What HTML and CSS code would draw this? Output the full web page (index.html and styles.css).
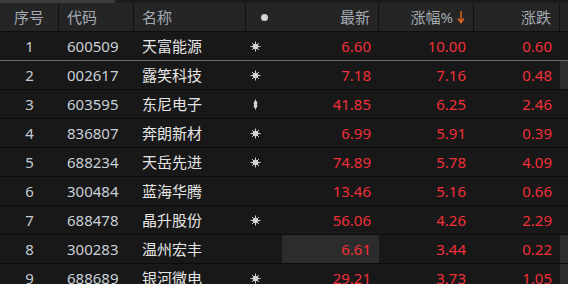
FILE: index.html
```html
<!DOCTYPE html>
<html lang="zh">
<head>
<meta charset="utf-8">
<link rel="stylesheet" href="styles.css">
</head>
<body>
<div class="board">
  <div class="hscroll"><div class="thumb"></div></div>
  <div class="row head">
    <div class="c c-no sep">序号</div>
    <div class="c c-code sep">代码</div>
    <div class="c c-name sep">名称</div>
    <div class="c c-dot"><span class="dot"></span></div>
    <div class="c c-num sep">最新</div>
    <div class="c c-num sep">涨幅%<svg class="arrow" width="8" height="14" viewBox="0 0 8 14"><path d="M4 1V12" stroke="#e8691e" stroke-width="1.4"/><path d="M1 8.5L4 12.5L7 8.5" fill="none" stroke="#e8691e" stroke-width="1.4"/></svg></div>
    <div class="c c-num sep">涨跌</div>
    <div class="c c-x"></div>
  </div>

  <div class="row pin">
    <div class="c c-no">1</div><div class="c c-code">600509</div><div class="c c-name">天富能源</div>
    <div class="c c-mark"><svg class="star" width="11" height="11" viewBox="0 0 11 11"><circle cx="5.5" cy="5.5" r="2.8" fill="#d2d2d2"/><path d="M5.5 0.5V10.5M0.5 5.5H10.5M2 2L9 9M9 2L2 9" stroke="#d2d2d2" stroke-width="1"/></svg></div>
    <div class="c c-num up">6.60</div><div class="c c-num up">10.00</div><div class="c c-num up">0.60</div><div class="c c-x"></div>
  </div>
  <div class="row">
    <div class="c c-no">2</div><div class="c c-code">002617</div><div class="c c-name">露笑科技</div>
    <div class="c c-mark"><svg class="star" width="11" height="11" viewBox="0 0 11 11"><circle cx="5.5" cy="5.5" r="2.8" fill="#d2d2d2"/><path d="M5.5 0.5V10.5M0.5 5.5H10.5M2 2L9 9M9 2L2 9" stroke="#d2d2d2" stroke-width="1"/></svg></div>
    <div class="c c-num up">7.18</div><div class="c c-num up">7.16</div><div class="c c-num up">0.48</div><div class="c c-x hl"></div>
  </div>
  <div class="row">
    <div class="c c-no">3</div><div class="c c-code">603595</div><div class="c c-name">东尼电子</div>
    <div class="c c-mark"><svg class="star" width="11" height="11" viewBox="0 0 11 11"><rect x="4" y="2" width="3" height="7" rx="1" fill="#d2d2d2"/><path d="M5.5 0.5V10.5M3.5 4H7.5M3.5 7H7.5" stroke="#d2d2d2" stroke-width="1"/></svg></div>
    <div class="c c-num up">41.85</div><div class="c c-num up">6.25</div><div class="c c-num up">2.46</div><div class="c c-x"></div>
  </div>
  <div class="row">
    <div class="c c-no">4</div><div class="c c-code">836807</div><div class="c c-name">奔朗新材</div>
    <div class="c c-mark"><svg class="star" width="11" height="11" viewBox="0 0 11 11"><circle cx="5.5" cy="5.5" r="2.8" fill="#d2d2d2"/><path d="M5.5 0.5V10.5M0.5 5.5H10.5M2 2L9 9M9 2L2 9" stroke="#d2d2d2" stroke-width="1"/></svg></div>
    <div class="c c-num up">6.99</div><div class="c c-num up">5.91</div><div class="c c-num up">0.39</div><div class="c c-x"></div>
  </div>
  <div class="row">
    <div class="c c-no">5</div><div class="c c-code">688234</div><div class="c c-name">天岳先进</div>
    <div class="c c-mark"><svg class="star" width="11" height="11" viewBox="0 0 11 11"><circle cx="5.5" cy="5.5" r="2.8" fill="#d2d2d2"/><path d="M5.5 0.5V10.5M0.5 5.5H10.5M2 2L9 9M9 2L2 9" stroke="#d2d2d2" stroke-width="1"/></svg></div>
    <div class="c c-num up">74.89</div><div class="c c-num up">5.78</div><div class="c c-num up">4.09</div><div class="c c-x"></div>
  </div>
  <div class="row">
    <div class="c c-no">6</div><div class="c c-code">300484</div><div class="c c-name">蓝海华腾</div>
    <div class="c c-mark"></div>
    <div class="c c-num up">13.46</div><div class="c c-num up">5.16</div><div class="c c-num up">0.66</div><div class="c c-x"></div>
  </div>
  <div class="row">
    <div class="c c-no">7</div><div class="c c-code">688478</div><div class="c c-name">晶升股份</div>
    <div class="c c-mark"><svg class="star" width="11" height="11" viewBox="0 0 11 11"><circle cx="5.5" cy="5.5" r="2.8" fill="#d2d2d2"/><path d="M5.5 0.5V10.5M0.5 5.5H10.5M2 2L9 9M9 2L2 9" stroke="#d2d2d2" stroke-width="1"/></svg></div>
    <div class="c c-num up">56.06</div><div class="c c-num up">4.26</div><div class="c c-num up">2.29</div><div class="c c-x"></div>
  </div>
  <div class="row">
    <div class="c c-no">8</div><div class="c c-code">300283</div><div class="c c-name">温州宏丰</div>
    <div class="c c-mark"></div>
    <div class="c c-num up hl">6.61</div><div class="c c-num up">3.44</div><div class="c c-num up">0.22</div><div class="c c-x hl"></div>
  </div>
  <div class="row">
    <div class="c c-no">9</div><div class="c c-code">688689</div><div class="c c-name">银河微电</div>
    <div class="c c-mark"><svg class="star" width="11" height="11" viewBox="0 0 11 11"><circle cx="5.5" cy="5.5" r="2.8" fill="#d2d2d2"/><path d="M5.5 0.5V10.5M0.5 5.5H10.5M2 2L9 9M9 2L2 9" stroke="#d2d2d2" stroke-width="1"/></svg></div>
    <div class="c c-num up">29.21</div><div class="c c-num up">3.73</div><div class="c c-num up">1.05</div><div class="c c-x hl"></div>
  </div>
</div>
</body>
</html>
```

FILE: styles.css
```css
html, body {
  margin: 0;
  padding: 0;
  background: #181818;
  overflow: hidden;
}
.board {
  width: 568px;
  font-family: "Noto Sans", "Noto Sans CJK SC", sans-serif;
  font-size: 15px;
  color: #c6ccd2;
}
.hscroll {
  height: 3px;
  background: #1c1c1c;
}
.thumb {
  width: 115px;
  height: 3px;
  background: #3c3c3c;
}
.row {
  display: grid;
  grid-template-columns: 59px 75px 112px 36px 97px 95px 86px 8px;
  height: 28px;
  border-bottom: 1px solid #0c0c0c;
  background: #181818;
}
.row.head {
  background: #252525;
  border-bottom: 1px solid #0f0f0f;
  color: #a4abb2;
}
.row.pin {
  border-bottom-color: #6a6a6a;
}
.c {
  box-sizing: border-box;
  display: flex;
  align-items: center;
  height: 28px;
  line-height: 28px;
  white-space: nowrap;
}
.sep {
  border-right: 1px solid #111111;
}
.c-no {
  justify-content: center;
}
.c-code {
  padding-left: 8px;
  color: #c8d0d8;
}
.head .c-code, .head .c-name {
  color: #a4abb2;
}
.c-name {
  padding-left: 8px;
  color: #e6e6e6;
}
.c-dot {
  justify-content: center;
}
.dot {
  width: 7px;
  height: 7px;
  border-radius: 50%;
  background: #d4d4d4;
}
.c-mark {
  padding-left: 4px;
}
.c-num {
  justify-content: flex-end;
  padding-right: 8px;
}
.up {
  color: #f0303a;
}
.arrow {
  margin-left: 4px;
}
.hl {
  background: #2c2c2c;
}
```
